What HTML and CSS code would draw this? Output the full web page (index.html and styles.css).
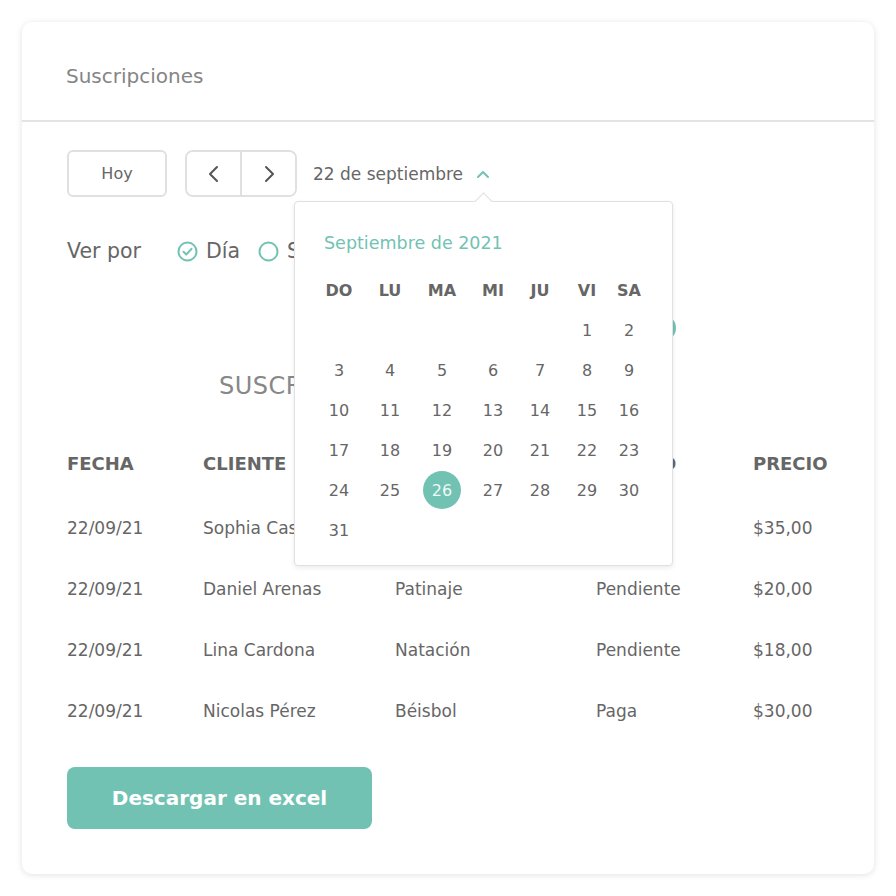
FILE: index.html
```html
<!DOCTYPE html>
<html lang="es">
<head>
  <meta charset="UTF-8" />
  <title>Suscripciones</title>
  <link rel="stylesheet" href="styles.css">
</head>
<body>
  <div class="card">
    <div class="card-header">Suscripciones</div>
    <div class="card-body">

      <div class="toolbar">
        <button class="btn-outline btn-today">Hoy</button>
        <div class="nav-group">
          <button class="nav-btn">
            <svg width="14" height="20" viewBox="0 0 14 20"><path d="M10 3 L3 10 L10 17" fill="none" stroke="#555" stroke-width="2" stroke-linecap="round" stroke-linejoin="round"/></svg>
          </button>
          <button class="nav-btn">
            <svg width="14" height="20" viewBox="0 0 14 20"><path d="M4 3 L11 10 L4 17" fill="none" stroke="#555" stroke-width="2" stroke-linecap="round" stroke-linejoin="round"/></svg>
          </button>
        </div>
        <div class="date-picker">
          <span class="date-label">22 de septiembre</span>
          <svg class="chevron" width="14" height="10" viewBox="0 0 14 10"><path d="M2 8 L7 3 L12 8" fill="none" stroke="#72c2b3" stroke-width="2" stroke-linecap="round" stroke-linejoin="round"/></svg>

          <div class="calendar">
            <div class="calendar-title">Septiembre de 2021</div>
            <div class="calendar-grid">
              <span class="dow">DO</span><span class="dow">LU</span><span class="dow">MA</span><span class="dow">MI</span><span class="dow">JU</span><span class="dow">VI</span><span class="dow">SA</span>
              <span></span><span></span><span></span><span></span><span></span><span class="day">1</span><span class="day">2</span>
              <span class="day">3</span><span class="day">4</span><span class="day">5</span><span class="day">6</span><span class="day">7</span><span class="day">8</span><span class="day">9</span>
              <span class="day">10</span><span class="day">11</span><span class="day">12</span><span class="day">13</span><span class="day">14</span><span class="day">15</span><span class="day">16</span>
              <span class="day">17</span><span class="day">18</span><span class="day">19</span><span class="day">20</span><span class="day">21</span><span class="day">22</span><span class="day">23</span>
              <span class="day">24</span><span class="day">25</span><span class="day selected"><span>26</span></span><span class="day">27</span><span class="day">28</span><span class="day">29</span><span class="day">30</span>
              <span class="day">31</span>
            </div>
          </div>
        </div>
      </div>

      <div class="view-by">
        <span class="view-label">Ver por</span>
        <label class="radio">
          <svg width="21" height="21" viewBox="0 0 21 21"><circle cx="10.5" cy="10.5" r="9" fill="none" stroke="#72c2b3" stroke-width="2"/><path d="M6.5 10.8 L9.3 13.5 L14.5 7.8" fill="none" stroke="#72c2b3" stroke-width="2" stroke-linecap="round" stroke-linejoin="round"/></svg>
          Día
        </label>
        <label class="radio">
          <svg width="21" height="21" viewBox="0 0 21 21"><circle cx="10.5" cy="10.5" r="9" fill="none" stroke="#72c2b3" stroke-width="2"/></svg>
          Semana
        </label>
        <label class="radio">
          <svg width="21" height="21" viewBox="0 0 21 21"><circle cx="10.5" cy="10.5" r="9" fill="none" stroke="#72c2b3" stroke-width="2"/></svg>
          Mes
        </label>
      </div>

      <div class="filter-row">
        <span class="filter-dot"></span>
      </div>

      <h3 class="table-title">SUSCRIPCIONES</h3>

      <div class="table">
        <div class="row head">
          <span>FECHA</span><span>CLIENTE</span><span>ACTIVIDAD</span><span>ESTADO</span><span>PRECIO</span>
        </div>
        <div class="row">
          <span>22/09/21</span><span>Sophia Castro</span><span>Fútbol</span><span>Paga</span><span>$35,00</span>
        </div>
        <div class="row">
          <span>22/09/21</span><span>Daniel Arenas</span><span>Patinaje</span><span>Pendiente</span><span>$20,00</span>
        </div>
        <div class="row">
          <span>22/09/21</span><span>Lina Cardona</span><span>Natación</span><span>Pendiente</span><span>$18,00</span>
        </div>
        <div class="row">
          <span>22/09/21</span><span>Nicolas Pérez</span><span>Béisbol</span><span>Paga</span><span>$30,00</span>
        </div>
      </div>

      <button class="btn-primary">Descargar en excel</button>
    </div>
  </div>
</body>
</html>
```

FILE: styles.css
```css
* {
  box-sizing: border-box;
}

body {
  margin: 0;
  padding: 22px;
  background: #fff;
  font-family: 'DejaVu Sans', sans-serif;
  color: #666;
}

.card {
  width: 852px;
  height: 852px;
  background: #fff;
  border-radius: 10px;
  box-shadow: 0 1px 6px rgba(0, 0, 0, 0.12);
}

.card-header {
  height: 100px;
  padding: 10px 44px 0;
  display: flex;
  align-items: center;
  font-size: 20px;
  color: #858585;
  border-bottom: 2px solid #e3e3e3;
}

.card-body {
  padding: 28px 44px 0 45px;
}

button {
  font-family: inherit;
  cursor: pointer;
  background: #fff;
}

.toolbar {
  display: flex;
  height: 47px;
  align-items: stretch;
}

.btn-outline {
  width: 100px;
  border: 2px solid #e2dfdf;
  border-radius: 6px;
  font-size: 16px;
  color: #666;
}

.nav-group {
  margin-left: 18px;
  width: 112px;
  display: flex;
  border: 2px solid #e2dfdf;
  border-radius: 8px;
  overflow: hidden;
}

.nav-btn {
  flex: 1;
  border: none;
  display: flex;
  align-items: center;
  justify-content: center;
  padding: 0;
}

.nav-btn + .nav-btn {
  border-left: 2px solid #e2dfdf;
}

.date-picker {
  position: relative;
  margin-left: 16px;
  display: flex;
  align-items: center;
  gap: 13px;
}

.date-label {
  font-size: 17px;
  color: #666;
}

.calendar {
  position: absolute;
  top: 51px;
  left: -19px;
  width: 379px;
  height: 365px;
  background: #fff;
  border: 1px solid #e0e0e0;
  border-radius: 4px;
  box-shadow: 0 2px 5px rgba(0, 0, 0, 0.08);
  padding: 29px 0 0 19px;
  z-index: 2;
}

.calendar::before {
  content: "";
  position: absolute;
  top: -7px;
  left: 182px;
  width: 12px;
  height: 12px;
  background: #fff;
  border-left: 1px solid #e0e0e0;
  border-top: 1px solid #e0e0e0;
  transform: rotate(45deg);
}

.calendar-title {
  padding-left: 10px;
  font-size: 17.5px;
  color: #72c2b3;
  height: 24px;
  line-height: 24px;
}

.calendar-grid {
  margin-top: 15px;
  display: grid;
  grid-template-columns: 50px 52px 52px 50px 44px 50px 34px;
  grid-auto-rows: 40px;
}

.calendar-grid span {
  display: flex;
  align-items: center;
  justify-content: center;
  font-size: 16px;
  color: #666;
}

.calendar-grid .dow {
  font-weight: bold;
  font-size: 16px;
}

.calendar-grid .selected span {
  width: 38px;
  height: 38px;
  border-radius: 50%;
  background: #72c2b3;
  color: #eef8f6;
}

.view-by {
  margin-top: 42px;
  display: flex;
  align-items: center;
  height: 24px;
  font-size: 20.5px;
  color: #666;
}

.view-label {
  margin-right: 36px;
}

.radio {
  display: flex;
  align-items: center;
  gap: 8px;
  margin-right: 18px;
}

.filter-row {
  margin-top: 52px;
  height: 26px;
  display: flex;
  padding-left: 583px;
}

.filter-dot {
  width: 26px;
  height: 26px;
  border-radius: 50%;
  background: #72c2b3;
}

.table-title {
  margin: 30px 0 0 152px;
  font-size: 24px;
  font-weight: normal;
  color: #888;
  letter-spacing: 0.5px;
  height: 30px;
  line-height: 30px;
}

.table {
  margin-top: 52px;
}

.row {
  display: grid;
  grid-template-columns: 136px 192px 201px 157px 1fr;
  height: 61px;
  align-items: center;
  font-size: 17px;
  color: #666;
}

.row.head {
  height: 0;
  margin-bottom: 44px;
  font-weight: bold;
  font-size: 18px;
}

.btn-primary {
  margin-top: 26px;
  width: 305px;
  height: 62px;
  border: none;
  border-radius: 8px;
  background: #72c2b3;
  color: #fff;
  font-size: 20px;
  font-weight: bold;
}
```
